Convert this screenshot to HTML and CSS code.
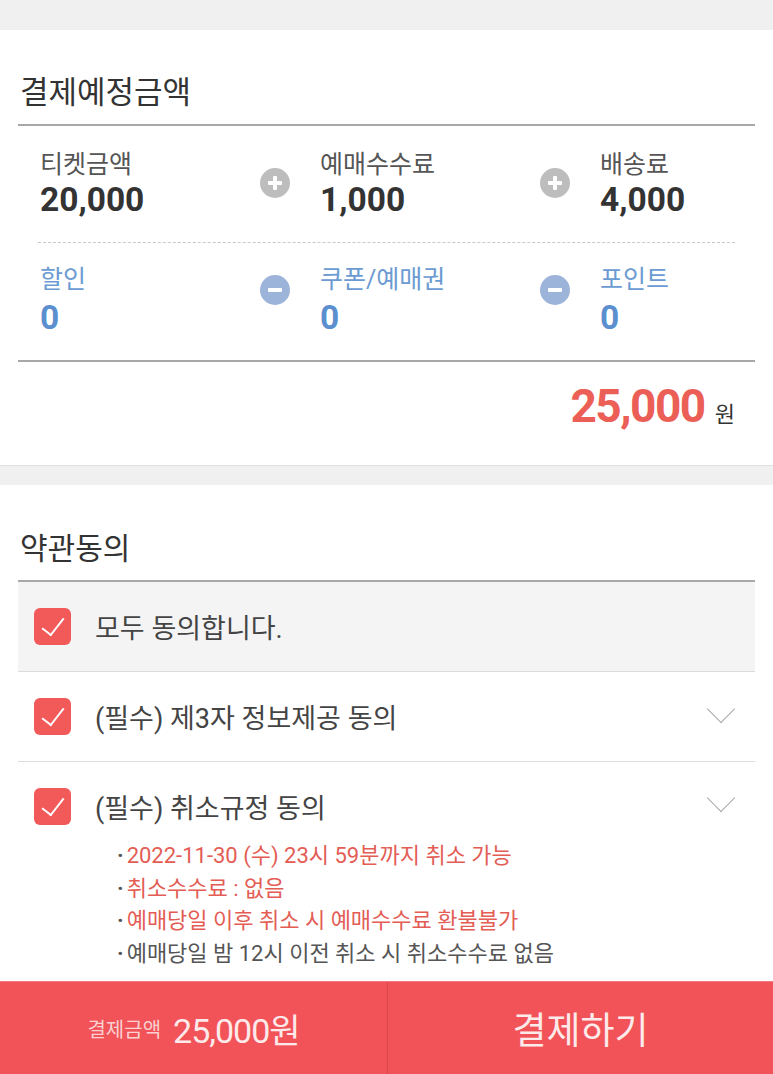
FILE: index.html
```html
<!DOCTYPE html>
<html lang="ko">
<head>
    <meta charset="UTF-8">
    <meta name="viewport" content="width=device-width, initial-scale=1.0">
    <title>결제</title>
    <link rel="stylesheet" href="styles.css">
</head>
<body>
    <div class="gap-top"></div>

    <section class="card">
        <h2 class="card-title">결제예정금액</h2>

        <div class="price-row">
            <div class="cell">
                <div class="cell-text">
                    <div class="label">티켓금액</div>
                    <div class="value">20,000</div>
                </div>
                <span class="op op-plus"></span>
            </div>
            <div class="cell">
                <div class="cell-text">
                    <div class="label">예매수수료</div>
                    <div class="value">1,000</div>
                </div>
                <span class="op op-plus"></span>
            </div>
            <div class="cell">
                <div class="cell-text">
                    <div class="label">배송료</div>
                    <div class="value">4,000</div>
                </div>
            </div>
        </div>

        <div class="price-row discount">
            <div class="cell">
                <div class="cell-text">
                    <div class="label">할인</div>
                    <div class="value">0</div>
                </div>
                <span class="op op-minus"></span>
            </div>
            <div class="cell">
                <div class="cell-text">
                    <div class="label">쿠폰/예매권</div>
                    <div class="value">0</div>
                </div>
                <span class="op op-minus"></span>
            </div>
            <div class="cell">
                <div class="cell-text">
                    <div class="label">포인트</div>
                    <div class="value">0</div>
                </div>
            </div>
        </div>

        <div class="total">
            <span class="total-num">25,000</span>
            <span class="total-unit">원</span>
        </div>
    </section>

    <div class="gap-mid"></div>

    <section class="card terms">
        <h2 class="card-title small">약관동의</h2>

        <div class="agree-row agree-all">
            <span class="check"></span>
            <span class="agree-text">모두 동의합니다.</span>
        </div>

        <div class="agree-row">
            <span class="check"></span>
            <span class="agree-text">(필수) 제3자 정보제공 동의</span>
            <span class="chevron"></span>
        </div>

        <div class="agree-block">
            <div class="agree-row no-line">
                <span class="check"></span>
                <span class="agree-text">(필수) 취소규정 동의</span>
                <span class="chevron"></span>
            </div>
            <ul class="rules">
                <li class="warn">2022-11-30 (수) 23시 59분까지 취소 가능</li>
                <li class="warn">취소수수료 : 없음</li>
                <li class="warn">예매당일 이후 취소 시 예매수수료 환불불가</li>
                <li>예매당일 밤 12시 이전 취소 시 취소수수료 없음</li>
            </ul>
        </div>
    </section>

    <div class="pay-bar">
        <div class="pay-sum">
            <span class="pay-sum-label">결제금액</span>
            <span class="pay-sum-num">25,000원</span>
        </div>
        <button class="pay-btn">결제하기</button>
    </div>
</body>
</html>
```

FILE: styles.css
```css
* {
    margin: 0;
    padding: 0;
    box-sizing: border-box;
}

body {
    font-family: Roboto, 'Noto Sans CJK KR', sans-serif;
    background: #f0f0f0;
    color: #333;
    height: 1074px;
    overflow: hidden;
}

.gap-top {
    height: 30px;
}

.gap-mid {
    height: 20px;
    border-top: 1px solid #dedede;
}

.card {
    background: white;
    padding: 0 18px;
}

.card-title {
    font-size: 31px;
    font-weight: 400;
    line-height: 34px;
    color: #333;
    padding: 46px 2px 14px;
    border-bottom: 2px solid #a8a8a8;
}

.card-title.small {
    font-size: 30px;
    padding-top: 47px;
}

/* price table */
.price-row {
    display: flex;
    margin: 0 20px;
    padding: 24px 0 22px 2px;
    border-bottom: 1px dashed #c8c8c8;
}

.price-row.discount {
    margin: 0;
    padding: 22px 20px 22px 22px;
    border-bottom: 2px solid #a8a8a8;
}

.cell {
    display: flex;
    flex: 0 0 280px;
}

.cell:last-child {
    flex: 1 1 auto;
    min-width: 0;
}

.cell-text {
    width: 220px;
}

.cell:last-child .cell-text {
    width: auto;
}

.label {
    font-size: 25px;
    line-height: 30px;
    color: #555;
}

.value {
    font-size: 33.5px;
    font-weight: 700;
    line-height: 40px;
    color: #333;
}

.discount .label {
    color: #6b9bd2;
}

.discount .value {
    color: #5b8fcf;
    margin-top: 3px;
}

.op {
    width: 30px;
    height: 30px;
    border-radius: 50%;
    margin-top: 18px;
    position: relative;
    background: #bdbdbd;
}

.op::before,
.op-plus::after {
    content: '';
    position: absolute;
    left: 8px;
    top: 13px;
    width: 14px;
    height: 4px;
    border-radius: 1px;
    background: white;
}

.op-plus::after {
    left: 13px;
    top: 8px;
    width: 4px;
    height: 14px;
}

.op-minus {
    background: #9cb3da;
    margin-top: 10px;
}

.total {
    display: flex;
    justify-content: flex-end;
    align-items: baseline;
    gap: 10px;
    padding: 19px 20px 34px 0;
}

.total-num {
    font-size: 46px;
    font-weight: 700;
    line-height: 50px;
    letter-spacing: -1.5px;
    color: #eb5f57;
}

.total-unit {
    font-size: 22px;
    color: #333;
}

/* terms */
.agree-row {
    display: flex;
    align-items: center;
    height: 90px;
    padding: 0 16px;
    border-bottom: 1px solid #dcdcdc;
}

.agree-row.no-line {
    border-bottom: none;
    height: 88px;
}

.agree-all {
    background: #f4f4f4;
}

.check {
    width: 37px;
    height: 37px;
    border-radius: 6px;
    background: #f25a5a;
    margin-right: 24px;
    position: relative;
    flex-shrink: 0;
}

.check::after {
    content: '';
    position: absolute;
    left: 13px;
    top: 5px;
    width: 10px;
    height: 20px;
    border-right: 2px solid white;
    border-bottom: 2px solid white;
    transform: rotate(38deg);
}

.agree-text {
    font-size: 27px;
    color: #444;
    flex: 1;
}

.chevron {
    width: 20px;
    height: 20px;
    border-right: 1.5px solid #a8a8a8;
    border-bottom: 1.5px solid #a8a8a8;
    transform: rotate(45deg);
    margin: -16px 8px 0 0;
}

.rules {
    list-style: none;
    padding: 0 0 20px 99px;
    margin-top: -10px;
}

.rules li {
    font-size: 22px;
    line-height: 32.5px;
    color: #555;
}

.rules li::before {
    content: '·';
    font-weight: 700;
    margin-right: 3px;
    color: #555;
}

.rules li.warn {
    color: #e35d55;
}

/* bottom bar */
.pay-bar {
    position: fixed;
    left: 0;
    right: 0;
    bottom: 0;
    height: 93px;
    display: flex;
    background: #f15358;
    border-top: 1px solid #f07a7d;
}

.pay-sum {
    width: 388px;
    display: flex;
    align-items: center;
    justify-content: center;
    gap: 12px;
    border-right: 1px solid #d9474b;
    color: #fde9ea;
}

.pay-sum-label {
    font-size: 20px;
    color: #fbd0d1;
}

.pay-sum-num {
    font-size: 34px;
    letter-spacing: -1px;
}

.pay-btn {
    flex: 1;
    background: none;
    border: none;
    font-family: inherit;
    font-size: 37px;
    color: #fdeaea;
}
```
